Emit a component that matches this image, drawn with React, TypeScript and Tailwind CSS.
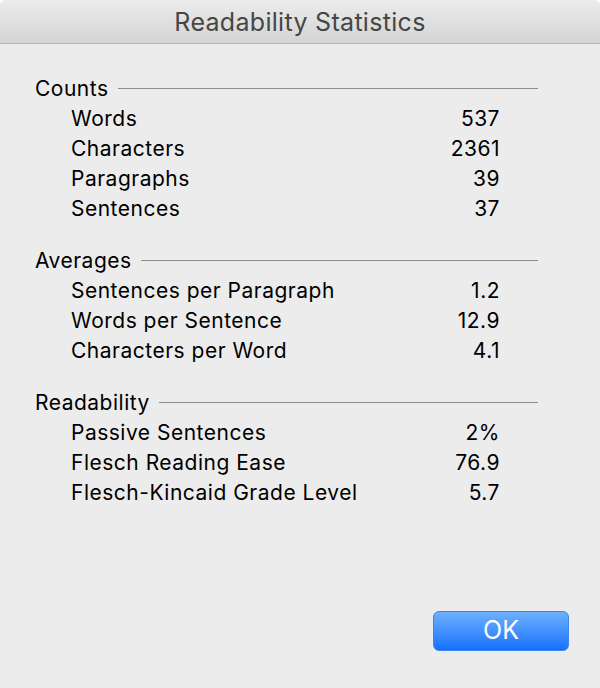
import React from "react";

const sections = [
  {
    title: "Counts",
    rows: [
      ["Words", "537"],
      ["Characters", "2361"],
      ["Paragraphs", "39"],
      ["Sentences", "37"],
    ],
  },
  {
    title: "Averages",
    rows: [
      ["Sentences per Paragraph", "1.2"],
      ["Words per Sentence", "12.9"],
      ["Characters per Word", "4.1"],
    ],
  },
  {
    title: "Readability",
    rows: [
      ["Passive Sentences", "2%"],
      ["Flesch Reading Ease", "76.9"],
      ["Flesch-Kincaid Grade Level", "5.7"],
    ],
  },
];

export default function App() {
  return (
    <div
      className="w-[600px] h-[688px] bg-white flex flex-col overflow-hidden"
      style={{ fontFamily: '"Inter", "Liberation Sans", sans-serif' }}
    >
      <div className="h-[44px] shrink-0 rounded-t-[5px] bg-gradient-to-b from-[#ececec] to-[#d4d4d4] border-b border-[#b4b4b4] flex items-center justify-center pt-[2px]">
        <span className="text-[25px] text-[#464646] tracking-[0.3px]">Readability Statistics</span>
      </div>
      <div className="flex-1 bg-[#ececec] flex flex-col pl-[35px] pr-[62px] pt-[30px]">
        {sections.map((s, i) => (
          <div key={s.title} className={i > 0 ? "mt-[22px]" : ""}>
            <div className="h-[30px] flex items-center gap-[9px]">
              <span className="text-[21px] tracking-[0.5px] text-black">{s.title}</span>
              <div className="flex-1 h-px bg-[#8c8c8c] -mt-[1px]" />
            </div>
            {s.rows.map(([k, v]) => (
              <div key={k} className="h-[30px] flex items-center pl-[36px] pr-[38px] text-[21px] tracking-[0.5px] text-black">
                <span className="flex-1">{k}</span>
                <span>{v}</span>
              </div>
            ))}
          </div>
        ))}
        <div className="flex-1" />
        <div className="flex justify-end pb-[37px] -mr-[31px]">
          <button className="w-[136px] h-[40px] rounded-[6px] bg-gradient-to-b from-[#6db0fe] to-[#1470fe] border border-[#3a86ec] text-white text-[25px] flex items-center justify-center">
            OK
          </button>
        </div>
      </div>
    </div>
  );
}
